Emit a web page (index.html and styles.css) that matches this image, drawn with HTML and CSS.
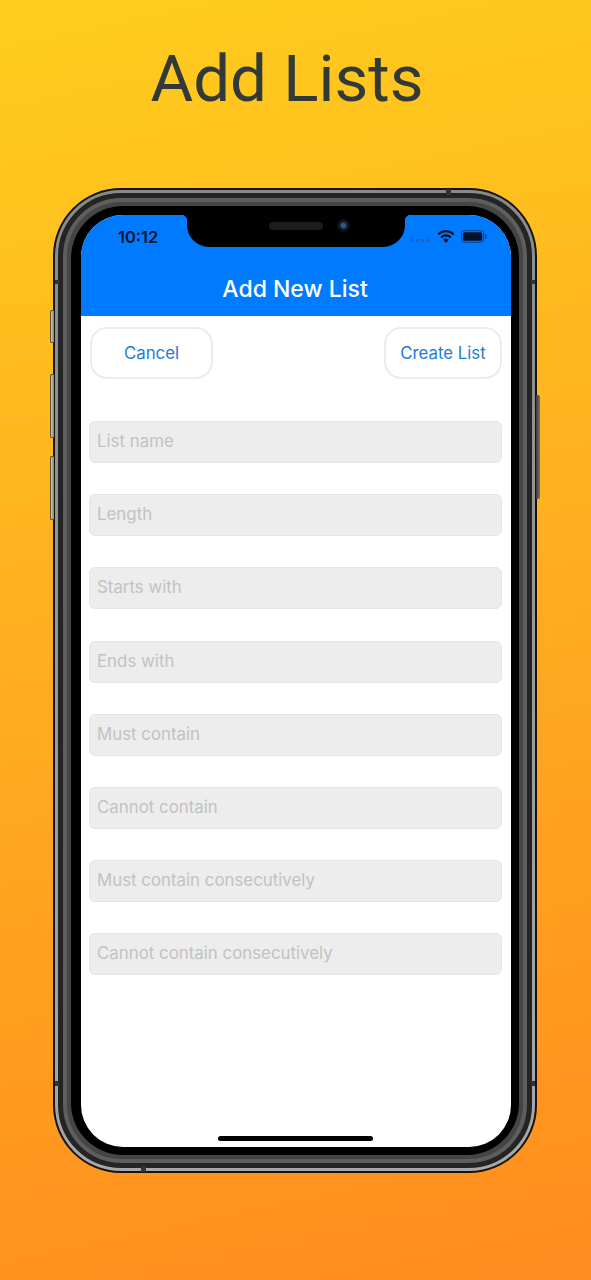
FILE: index.html
```html
<!DOCTYPE html>
<html lang="en">
<head>
<meta charset="utf-8">
<title>Add Lists</title>
<link rel="stylesheet" href="styles.css">
</head>
<body>
<h1 class="headline">Add Lists</h1>
<div class="phone">
  <span class="side side-mute"></span>
  <span class="side side-up"></span>
  <span class="side side-down"></span>
  <span class="side side-power"></span>
  <span class="seam seam-top"></span>
  <span class="seam seam-bottom"></span>
  <span class="seam seam-l1"></span>
  <span class="seam seam-l2"></span>
  <span class="seam seam-r1"></span>
  <span class="seam seam-r2"></span>
  <div class="band">
    <div class="band-inner">
      <div class="bezel">
        <div class="screen">
          <div class="notch">
            <span class="speaker"></span>
            <span class="camera"></span>
          </div>
          <header class="appbar">
            <div class="status">
              <span class="time">10:12</span>
              <span class="status-icons">
                <svg class="signal" viewBox="0 0 20 4" aria-hidden="true"><g fill="#1f62bb"><rect x="0" y="1" width="3" height="3" rx="1"/><rect x="5" y="1" width="3" height="3" rx="1"/><rect x="10" y="1" width="3" height="3" rx="1"/><rect x="15" y="1" width="3" height="3" rx="1"/></g></svg>
                <svg class="wifi" viewBox="0 0 18 13" aria-hidden="true"><path d="M9 13 6.2 9.8a4 4 0 0 1 5.6 0Z" fill="#04122a"/><path d="M4.2 7.4a6.6 6.6 0 0 1 9.6 0M1.3 4.4a10.8 10.8 0 0 1 15.4 0" fill="none" stroke="#04122a" stroke-width="2.2"/></svg>
                <svg class="battery" viewBox="0 0 27 13" aria-hidden="true"><rect x=".5" y=".5" width="23" height="12" rx="3" fill="none" stroke="#0a3f86"/><rect x="2" y="2" width="20" height="9" rx="1.6" fill="#04122a"/><rect x="25" y="4" width="1.5" height="5" rx=".7" fill="#0a3f86"/></svg>
              </span>
            </div>
            <h2 class="appbar-title">Add New List</h2>
          </header>
          <main class="content">
            <div class="actions">
              <button class="btn btn-cancel" type="button">Cancel</button>
              <button class="btn btn-create" type="button">Create List</button>
            </div>
            <form class="fields">
              <div class="field">List name</div>
              <div class="field">Length</div>
              <div class="field">Starts with</div>
              <div class="field">Ends with</div>
              <div class="field">Must contain</div>
              <div class="field">Cannot contain</div>
              <div class="field">Must contain consecutively</div>
              <div class="field">Cannot contain consecutively</div>
            </form>
          </main>
          <span class="home"></span>
        </div>
      </div>
    </div>
  </div>
</div>
</body>
</html>
```

FILE: styles.css
```css
* { box-sizing: border-box; }

html, body { margin: 0; height: 1280px; }

body {
  width: 591px;
  overflow: hidden;
  background: linear-gradient(168deg, #ffcd1e 0%, #ffb31f 40%, #ff8c1f 100%);
  font-family: "Inter", "Liberation Sans", sans-serif;
  padding-top: 38px;
}

.headline {
  margin: 0 17px 0 0;
  height: 150px;
  font: 400 65.5px/82px "Roboto", sans-serif;
  color: #313a36;
  text-align: center;
}

.phone {
  position: relative;
  width: 484px;
  height: 985px;
  margin-left: 53px;
  border-radius: 68px;
  background: #141414;
  padding: 2px;
}

.band {
  height: 100%;
  border-radius: 66px;
  background: linear-gradient(180deg, #8a8a8a, #a8a8a8);
  padding: 3px;
}

.band-inner {
  height: 100%;
  border-radius: 63px;
  background: #454545;
  border: 5px solid #242424;
  box-shadow: inset 0 0 0 4px #5e5e5e;
  padding: 8px;
}

.bezel {
  height: 100%;
  border-radius: 52px;
  background: #000;
  padding: 9px 8px 8px 10px;
}

.screen {
  position: relative;
  height: 100%;
  border-radius: 42px;
  background: #fff;
  overflow: hidden;
  display: flex;
  flex-direction: column;
}

.notch {
  position: absolute;
  top: 0;
  left: 106px;
  width: 218px;
  height: 32px;
  background: #000;
  border-radius: 0 0 22px 22px;
}

.notch::before,
.notch::after {
  content: "";
  position: absolute;
  top: 0;
  width: 6px;
  height: 6px;
}

.notch::before { left: -6px; background: radial-gradient(circle at 0 100%, transparent 6px, #000 6.5px); }
.notch::after { right: -6px; background: radial-gradient(circle at 100% 100%, transparent 6px, #000 6.5px); }

.speaker {
  position: absolute;
  left: 82px;
  top: 7px;
  width: 54px;
  height: 8px;
  border-radius: 4px;
  background: #1c1c1c;
}

.camera {
  position: absolute;
  left: 150px;
  top: 4px;
  width: 13px;
  height: 13px;
  border-radius: 50%;
  background: radial-gradient(circle at 50% 50%, #2a5a90 0 2px, #14202e 3.5px, #0c0c0f 6px);
}

.appbar {
  height: 101px;
  flex: none;
  background: #007aff;
  color: #fff;
}

.status {
  height: 44px;
  padding: 12px 24px 0 37px;
  display: flex;
  align-items: flex-start;
  justify-content: space-between;
}

.time {
  font: 600 16.5px/20px "Inter", sans-serif;
  color: #05152e;
}

.status-icons {
  display: flex;
  align-items: center;
  gap: 6px;
  height: 20px;
}

.signal { width: 20px; height: 4px; margin-top: 5px; }
.wifi { width: 18px; height: 13px; margin-top: -2px; }
.battery { width: 26px; height: 13px; margin-top: -1px; }

.appbar-title {
  margin: 0 2px 0 0;
  padding-top: 14px;
  font: 500 23px/32px "Inter", sans-serif;
  text-align: center;
}

.content {
  flex: 1;
  padding: 11px 9px 0 8px;
}

.actions {
  display: flex;
  justify-content: space-between;
  padding: 0 0 0 1px;
  height: 52px;
}

.btn {
  height: 52px;
  background: #fff;
  border: 2px solid #ececec;
  border-radius: 17px;
  color: #1f7bd8;
  font: 400 16.8px/24px "Inter", sans-serif;
  padding: 0;
}

.btn-cancel { width: 123px; }
.btn-create { width: 118px; }

.fields {
  margin-top: 42px;
  display: flex;
  flex-direction: column;
  gap: 31.2px;
}

.field {
  height: 42px;
  background: #ededed;
  border: 1px solid #e5e5e5;
  border-radius: 6px;
  padding-left: 7px;
  color: #c2c2c2;
  font: 400 16.85px/39px "Inter", sans-serif;
}

.home {
  position: absolute;
  left: 137px;
  bottom: 6px;
  width: 155px;
  height: 5px;
  border-radius: 3px;
  background: #000;
}

.side {
  position: absolute;
  width: 4px;
  background: linear-gradient(90deg, #d9cb96, #8a8263);
  border: 1px solid #5c5640;
  border-right: 0;
  border-radius: 2px 0 0 2px;
}

.side-mute { left: -3px; top: 122px; height: 33px; }
.side-up { left: -3px; top: 186px; height: 64px; }
.side-down { left: -3px; top: 268px; height: 64px; }

.side-power {
  left: 483px;
  top: 207px;
  height: 104px;
  background: linear-gradient(90deg, #3a3a3a, #7a7560);
  border: 0;
  border-radius: 0 2px 2px 0;
}

.seam { position: absolute; background: #333; z-index: 1; }
.seam-top { left: 393px; top: 1px; width: 5px; height: 6px; }
.seam-bottom { left: 88px; bottom: 1px; width: 5px; height: 6px; }
.seam-l1 { left: 2px; top: 92px; width: 4px; height: 4px; }
.seam-l2 { left: 2px; top: 893px; width: 4px; height: 5px; }
.seam-r1 { left: 478px; top: 92px; width: 4px; height: 4px; }
.seam-r2 { left: 478px; top: 893px; width: 4px; height: 5px; }
```
